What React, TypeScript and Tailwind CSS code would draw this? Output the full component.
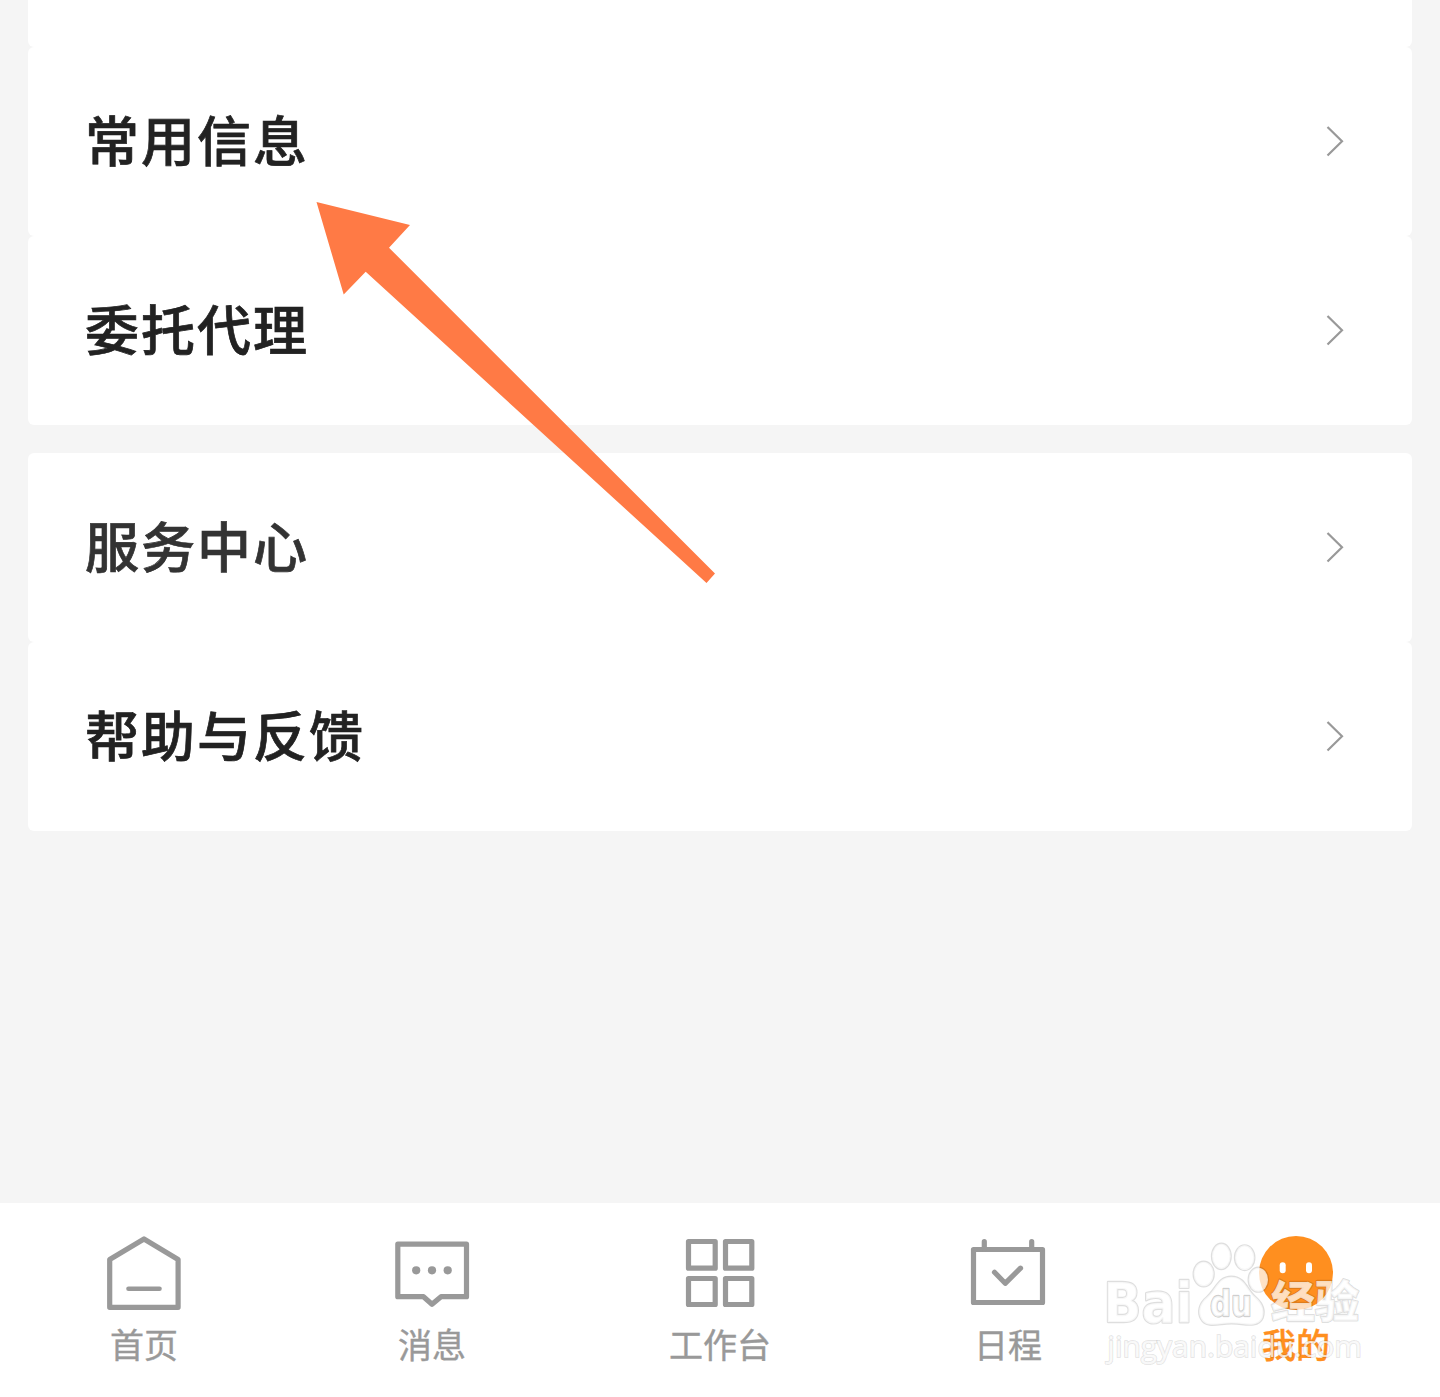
import type { ReactNode } from "react";
import clsx from "clsx";

interface ITab {
  label: string;
  icon: ReactNode;
  active?: boolean;
}

const groups = [
  ["常用信息", "委托代理"],
  ["服务中心", "帮助与反馈"],
];

const tabs: ITab[] = [
  {
    label: "首页",
    icon: (
      <>
        <path d="M40 5.9 74.1 26.5V74.3H5.7V26.5Z" />
        <path d="M24.5 55.7H55.5" strokeWidth="4.6" />
      </>
    ),
  },
  {
    label: "消息",
    icon: (
      <>
        <path d="M5.8 11.2H74.5V63.7H49L40 71.2 31.5 63.7H5.8Z" />
        <g fill="currentColor" stroke="none">
          <circle cx="24.2" cy="37.3" r="4.1" />
          <circle cx="40" cy="37.3" r="4.1" />
          <circle cx="55.7" cy="37.3" r="4.1" />
        </g>
      </>
    ),
  },
  {
    label: "工作台",
    icon: (
      <>
        <rect x="8.5" y="8.5" width="26.7" height="26.7" />
        <rect x="45.5" y="8.5" width="26.3" height="26.7" />
        <rect x="8.5" y="45.5" width="26.7" height="26" />
        <rect x="45.5" y="45.5" width="26.3" height="26" />
      </>
    ),
  },
  {
    label: "日程",
    icon: (
      <>
        <rect x="5.5" y="16.5" width="69" height="53" />
        <path d="M16.3 8.7V16M63.7 8.7V16M26.5 39.3 37.2 50.3 52.5 35.2" />
      </>
    ),
  },
  {
    label: "我的",
    active: true,
    icon: (
      <>
        <circle cx="40" cy="40" r="37" fill="#ff8f1f" stroke="none" />
        <rect x="23.7" y="29.3" width="6" height="11" rx="3" fill="#fff" stroke="none" />
        <rect x="50" y="29.3" width="6" height="11" rx="3" fill="#fff" stroke="none" />
      </>
    ),
  },
];

function MenuRow({ label }: { label: string }) {
  return (
    <div className="flex h-[189px] items-center justify-between rounded-md bg-white pr-[66px] pb-0.5 pl-[57px]">
      <span
        className={clsx(
          "pb-[3px] text-[54px] leading-none font-medium tracking-[2px] [-webkit-text-stroke:0.7px_currentColor]",
          label === "服务中心" ? "text-[#333333]" : "text-[#222222]"
        )}
      >
        {label}
      </span>
      <svg width="22" height="34" viewBox="0 0 22 34" fill="none" stroke="#999" strokeWidth="2.2">
        <path d="M3.5 3 18 17.3 3.5 31.5" />
      </svg>
    </div>
  );
}

function Watermark() {
  return (
    <svg
      className="pointer-events-none absolute top-[1220px] left-[1090px]"
      width="290"
      height="160"
      viewBox="0 0 870 480"
      fill="#fff"
      fillOpacity="0.74"
      stroke="#000"
      strokeOpacity="0.13"
      strokeWidth="7"
      strokeLinejoin="round"
      paintOrder="stroke"
    >
      <ellipse cx="341" cy="162" rx="30" ry="37" />
      <ellipse cx="394" cy="109" rx="28" ry="38" />
      <ellipse cx="464" cy="113" rx="29" ry="37" />
      <ellipse cx="505" cy="179" rx="29" ry="36" />
      <path d="M424 170C385 170 378 207 350 232C326 252 323 278 333 296C345 319 372 315 395 312Q425 308 455 312C478 315 507 318 518 293C526 270 515 248 497 232C470 208 464 170 424 170Z" />
      <text
        x="40"
        y="307"
        fontSize="166"
        fontWeight="700"
        textLength="268"
        lengthAdjust="spacingAndGlyphs"
        fontFamily="'DejaVu Sans', sans-serif"
      >
        Bai
      </text>
      <text
        x="360"
        y="288"
        fontSize="106"
        fontWeight="700"
        textLength="126"
        lengthAdjust="spacingAndGlyphs"
        fontFamily="'DejaVu Sans', sans-serif"
        strokeOpacity="0.2"
      >
        du
      </text>
      <text
        x="543"
        y="295"
        fontSize="133"
        fontWeight="900"
        textLength="264"
        lengthAdjust="spacingAndGlyphs"
        fontFamily="'Noto Sans CJK SC', sans-serif"
      >
        经验
      </text>
      <text
        x="52"
        y="411"
        fontSize="86"
        textLength="764"
        lengthAdjust="spacingAndGlyphs"
        fontFamily="'Open Sans', sans-serif"
        strokeOpacity="0.1"
        strokeWidth="6"
      >
        jingyan.baidu.com
      </text>
    </svg>
  );
}

export default function App() {
  return (
    <div className="relative flex h-[1397px] w-[1440px] flex-col overflow-hidden bg-[#f5f5f5] font-['Noto_Sans_CJK_SC',sans-serif]">
      <main className="flex flex-1 flex-col px-7">
        <div className="h-[47px] rounded-b-md bg-white" />
        <div className="flex flex-col gap-7">
          {groups.map((rows) => (
            <section key={rows[0]}>
              {rows.map((label) => (
                <MenuRow key={label} label={label} />
              ))}
            </section>
          ))}
        </div>
      </main>

      <nav className="grid h-[194px] grid-cols-5 bg-white pt-[30px]">
        {tabs.map((tab) => (
          <div
            key={tab.label}
            className={clsx(
              "flex flex-col items-center",
              tab.active ? "font-medium text-[#ff8f1f]" : "text-[#999999]"
            )}
          >
            <svg
              width="80"
              height="80"
              viewBox="0 0 80 80"
              fill="none"
              stroke="currentColor"
              strokeWidth="5.2"
              strokeLinecap="round"
              strokeLinejoin="round"
            >
              {tab.icon}
            </svg>
            <span className="mt-[14px] text-[34px] leading-[34px] [-webkit-text-stroke:0.4px_currentColor]">
              {tab.label}
            </span>
          </div>
        ))}
      </nav>

      {/* pointer to the first menu row */}
      <svg
        className="pointer-events-none absolute top-[200px] left-[315px]"
        width="402"
        height="386"
        viewBox="315 200 402 386"
        fill="#ff7a45"
      >
        <path d="M316.5 202 410 225 389 247.7 715 573.5 706.5 583 365.7 271.7 343.7 294.5Z" />
      </svg>

      <Watermark />
    </div>
  );
}
